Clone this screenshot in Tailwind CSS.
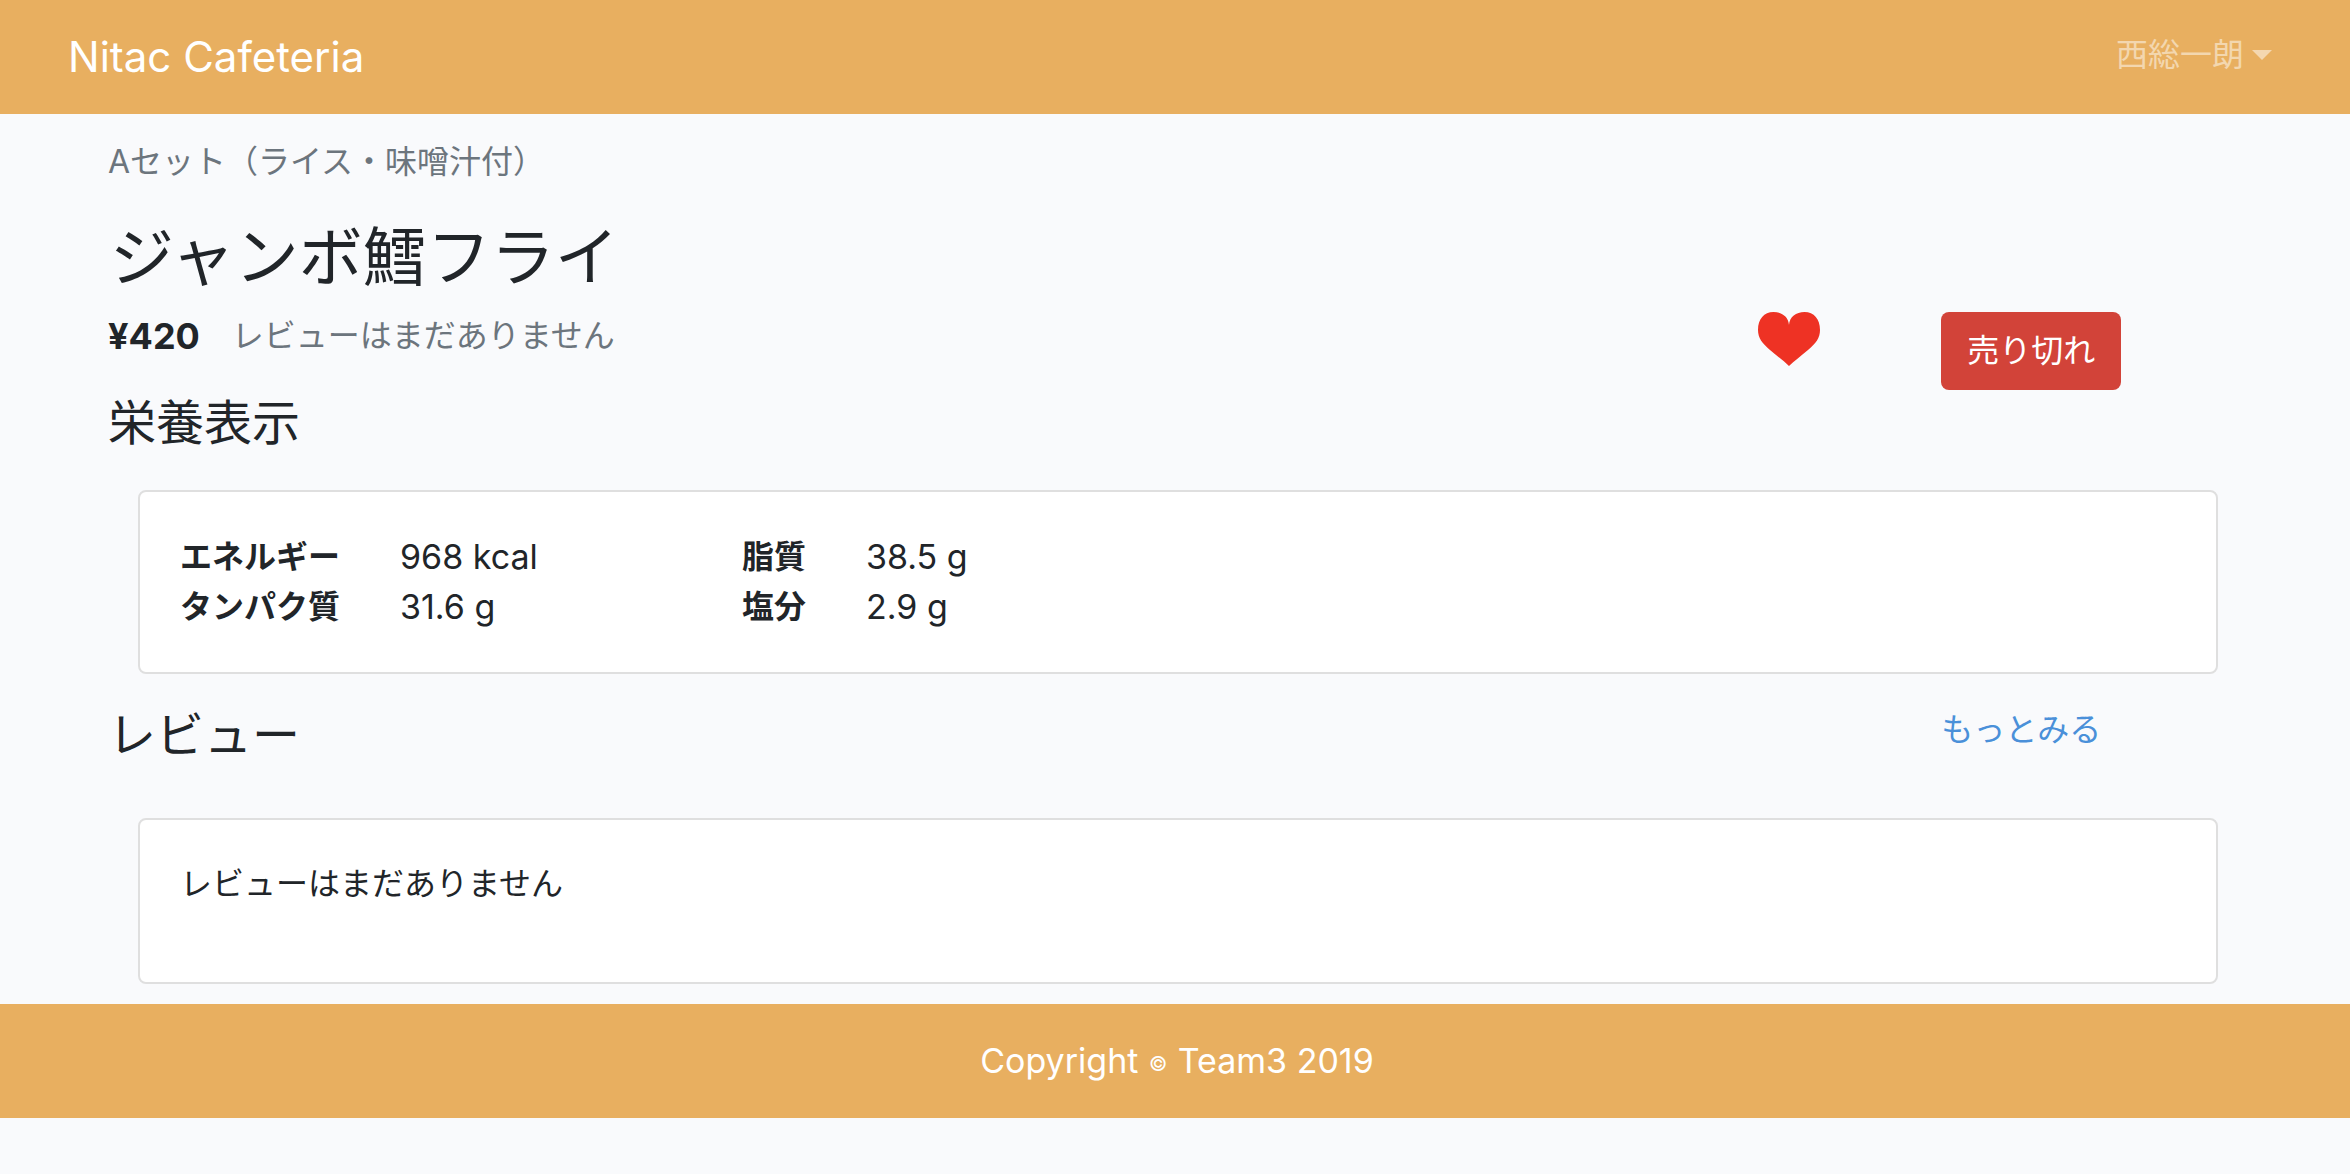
<!DOCTYPE html>
<html lang="ja">
<head>
<meta charset="utf-8">
<meta name="viewport" content="width=device-width, initial-scale=1">
<title>Nitac Cafeteria</title>
<script src="https://cdn.jsdelivr.net/npm/@tailwindcss/browser@4"></script>
</head>
<body class="min-h-screen bg-[#f9fafc] font-['Inter','Noto_Sans_CJK_JP',sans-serif] text-[32px] leading-[48px] text-[#212529]">
  <header class="flex h-[114px] items-center justify-between bg-[#e8af60] pr-[78px] pl-[68px]">
    <a href="#" class="text-[42px] text-white">Nitac Cafeteria</a>
    <button type="button" class="mb-1 flex items-center gap-2 text-white/50">
      <span>西総一朗</span>
      <svg class="h-[10px] w-5" viewBox="0 0 20 10" fill="currentColor" aria-hidden="true"><path d="M0 0h20L10 10z"/></svg>
    </button>
  </header>

  <main class="mr-[72px] ml-[78px] pt-6">
    <p class="px-[30px] text-[#6c757d]">Aセット（ライス・味噌汁付）</p>
    <h1 class="mt-8 px-8 text-[64px] leading-[78px]">ジャンボ鱈フライ</h1>

    <div class="mt-4 grid grid-cols-12 items-start">
      <div class="col-span-9 flex items-center gap-8 pl-[30px]">
        <strong class="text-[36px] font-bold">¥420</strong>
        <span class="text-[#6c757d]">レビューはまだありません</span>
      </div>
      <button type="button" aria-label="お気に入り" class="pl-[30px]">
        <svg class="h-[54px] w-[62px]" viewBox="0 0 62 54" fill="#ee3224" aria-hidden="true"><path d="M31 54C26 49 19 44 12 38C4 31 0 26 0 18C0 7 6 0 15.500 0C24 0 30.500 5 31 13C31.500 5 38 0 46.500 0C56 0 62 7 62 18C62 26 58 31 50 38C43 44 36 49 31 54Z"/></svg>
      </button>
      <div class="col-span-2 pl-[30px]">
        <button type="button" class="h-[78px] rounded-lg bg-[#d24339] px-[26px] whitespace-nowrap text-white">売り切れ</button>
      </div>
    </div>

    <h2 class="mt-1 px-[30px] text-[48px] leading-[58px]">栄養表示</h2>
    <section class="mx-[60px] mt-[38px] rounded-lg border-2 border-[#dfdfdf] bg-white px-10 py-10">
      <table class="text-left leading-[50px]">
        <tbody>
          <tr>
            <th scope="row" class="pr-[60px] font-bold">エネルギー</th>
            <td class="w-[342px] text-[34px]">968 kcal</td>
            <th scope="row" class="pr-[60px] font-bold">脂質</th>
            <td class="text-[34px]">38.5 g</td>
          </tr>
          <tr>
            <th scope="row" class="pr-[60px] font-bold">タンパク質</th>
            <td class="text-[34px]">31.6 g</td>
            <th scope="row" class="pr-[60px] font-bold">塩分</th>
            <td class="text-[34px]">2.9 g</td>
          </tr>
        </tbody>
      </table>
    </section>

    <div class="mt-8 grid grid-cols-12 items-start">
      <h2 class="col-span-10 px-[30px] text-[48px] leading-[58px]">レビュー</h2>
      <a href="#" class="col-span-2 pl-[30px] text-[#4a90d9]">もっとみる</a>
    </div>
    <section class="mx-[60px] mt-[54px] rounded-lg border-2 border-[#dfdfdf] bg-white px-10 pt-10 pb-[74px]">
      <p>レビューはまだありません</p>
    </section>
  </main>

  <footer class="mt-5 flex h-[114px] items-center justify-center bg-[#e8af60] pl-1 text-[34px] text-white">
    <p>Copyright <span class="mx-px align-middle text-xl">©</span> Team3 2019</p>
  </footer>
</body>
</html>
